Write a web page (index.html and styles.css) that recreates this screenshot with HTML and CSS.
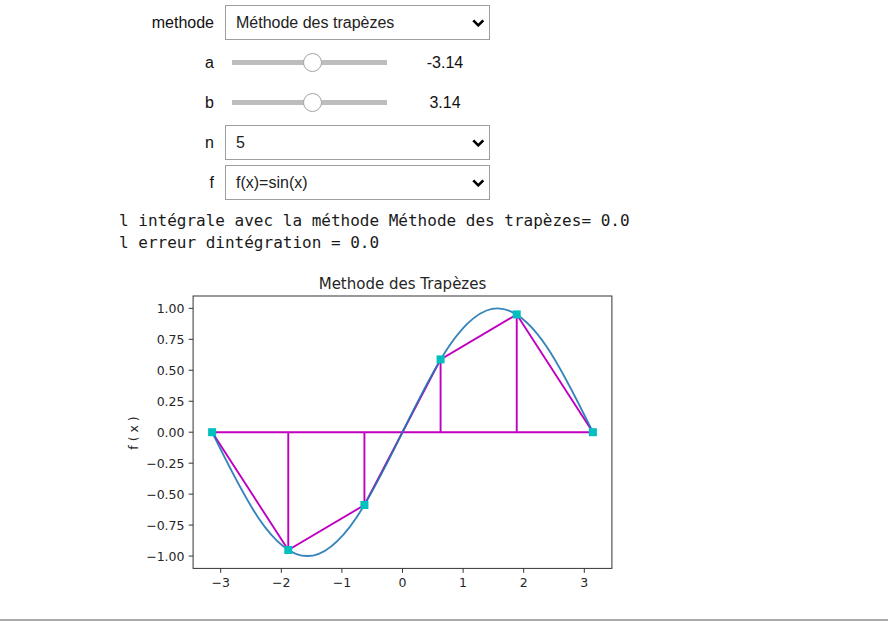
FILE: index.html
```html
<!DOCTYPE html>
<html lang="fr">
<head>
<meta charset="utf-8">
<title>Methode des Trapèzes</title>
<link rel="stylesheet" href="styles.css">
</head>
<body>
<div class="page">
  <div class="widgets">
    <div class="row">
      <label class="lbl">methode</label>
      <div class="dropdown"><span class="dd-text">Méthode des trapèzes</span><svg class="chev" viewBox="0 0 12 8"><path d="M1 1.3 L6 6.3 L11 1.3"/></svg></div>
    </div>
    <div class="row">
      <label class="lbl">a</label>
      <div class="slider"><div class="track"><span class="thumb"></span></div><span class="readout">-3.14</span></div>
    </div>
    <div class="row">
      <label class="lbl">b</label>
      <div class="slider"><div class="track"><span class="thumb"></span></div><span class="readout">3.14</span></div>
    </div>
    <div class="row">
      <label class="lbl">n</label>
      <div class="dropdown"><span class="dd-text">5</span><svg class="chev" viewBox="0 0 12 8"><path d="M1 1.3 L6 6.3 L11 1.3"/></svg></div>
    </div>
    <div class="row">
      <label class="lbl">f</label>
      <div class="dropdown"><span class="dd-text">f(x)=sin(x)</span><svg class="chev" viewBox="0 0 12 8"><path d="M1 1.3 L6 6.3 L11 1.3"/></svg></div>
    </div>
  </div>
  <pre class="out">l intégrale avec la méthode Méthode des trapèzes= 0.0
l erreur dintégration = 0.0</pre>
  <svg class="fig" viewBox="110 254 520 350" xmlns="http://www.w3.org/2000/svg">
    <text class="title" x="402.5" y="288.5" text-anchor="middle">Methode des Trapèzes</text>
    <g class="magenta">
      <line x1="212.12" y1="432.2" x2="592.88" y2="432.2"/>
      <line x1="288.27" y1="432.2" x2="288.27" y2="549.99"/>
      <line x1="364.42" y1="432.2" x2="364.42" y2="505.0"/>
      <line x1="440.58" y1="432.2" x2="440.58" y2="359.4"/>
      <line x1="516.73" y1="432.2" x2="516.73" y2="314.41"/>
      <polyline points="212.12,432.2 288.27,549.99 364.42,505.0 440.58,359.4 516.73,314.41 592.88,432.2"/>
    </g>
    <path class="sine" d="M212.12,432.2 C243.16,495.65 272.86,556.05 307.31,556.05 C341.76,556.05 371.45,495.65 402.5,432.2 C433.55,368.75 463.24,308.35 497.69,308.35 C532.14,308.35 561.84,368.75 592.88,432.2"/>
    <g class="markers">
      <rect x="208.12" y="428.2" width="8" height="8"/>
      <rect x="284.27" y="545.99" width="8" height="8"/>
      <rect x="360.42" y="501.0" width="8" height="8"/>
      <rect x="436.58" y="355.4" width="8" height="8"/>
      <rect x="512.73" y="310.41" width="8" height="8"/>
      <rect x="588.88" y="428.2" width="8" height="8"/>
    </g>
    <rect class="spine" x="193.1" y="296" width="418.8" height="272.4"/>
    <g class="ticks">
      <line x1="188.7" y1="308.35" x2="193.1" y2="308.35"/>
      <line x1="188.7" y1="339.31" x2="193.1" y2="339.31"/>
      <line x1="188.7" y1="370.28" x2="193.1" y2="370.28"/>
      <line x1="188.7" y1="401.24" x2="193.1" y2="401.24"/>
      <line x1="188.7" y1="432.2" x2="193.1" y2="432.2"/>
      <line x1="188.7" y1="463.16" x2="193.1" y2="463.16"/>
      <line x1="188.7" y1="494.13" x2="193.1" y2="494.13"/>
      <line x1="188.7" y1="525.09" x2="193.1" y2="525.09"/>
      <line x1="188.7" y1="556.05" x2="193.1" y2="556.05"/>
      <line x1="220.7" y1="568.4" x2="220.7" y2="572.8"/>
      <line x1="281.3" y1="568.4" x2="281.3" y2="572.8"/>
      <line x1="341.9" y1="568.4" x2="341.9" y2="572.8"/>
      <line x1="402.5" y1="568.4" x2="402.5" y2="572.8"/>
      <line x1="463.1" y1="568.4" x2="463.1" y2="572.8"/>
      <line x1="523.7" y1="568.4" x2="523.7" y2="572.8"/>
      <line x1="584.3" y1="568.4" x2="584.3" y2="572.8"/>
    </g>
    <g class="ylabels" text-anchor="end">
      <text x="184.5" y="312.85">1.00</text>
      <text x="184.5" y="343.81">0.75</text>
      <text x="184.5" y="374.78">0.50</text>
      <text x="184.5" y="405.74">0.25</text>
      <text x="184.5" y="436.7">0.00</text>
      <text x="184.5" y="467.66">−0.25</text>
      <text x="184.5" y="498.63">−0.50</text>
      <text x="184.5" y="529.59">−0.75</text>
      <text x="184.5" y="560.55">−1.00</text>
    </g>
    <g class="xlabels" text-anchor="middle">
      <text x="220.7" y="586.5">−3</text>
      <text x="281.3" y="586.5">−2</text>
      <text x="341.9" y="586.5">−1</text>
      <text x="402.5" y="586.5">0</text>
      <text x="463.1" y="586.5">1</text>
      <text x="523.7" y="586.5">2</text>
      <text x="584.3" y="586.5">3</text>
    </g>
    <text class="ylab" transform="translate(137.7,433) rotate(-90)" text-anchor="middle">f ( x )</text>
  </svg>
</div>
<div class="rule"></div>
</body>
</html>
```
FILE: styles.css
```css
html, body {
  margin: 0;
  padding: 0;
  background: #ffffff;
}

body {
  font-family: "Liberation Sans", Arial, sans-serif;
  color: #000;
}

.page {
  height: 619px;
  overflow: hidden;
}

.widgets {
  display: flex;
  flex-direction: column;
  gap: 5px;
  padding-top: 5px;
  padding-left: 114px;
}

.row {
  display: flex;
  align-items: center;
  height: 35px;
}

.lbl {
  width: 100px;
  margin-right: 11px;
  text-align: right;
  font-size: 16px;
  color: #111;
}

.dropdown {
  width: 265px;
  height: 35px;
  box-sizing: border-box;
  border: 1px solid #9e9e9e;
  display: flex;
  align-items: center;
  padding: 0 5px 0 10px;
  font-size: 16px;
  color: #222;
  background: #fff;
}

.dd-text {
  flex: 1;
  white-space: nowrap;
}

.chev {
  width: 12.5px;
  height: 8px;
  flex: none;
}

.chev path {
  fill: none;
  stroke: #000;
  stroke-width: 2.6;
  stroke-linecap: butt;
  stroke-linejoin: miter;
}

.slider {
  display: flex;
  align-items: center;
  width: 265px;
}

.track {
  position: relative;
  margin-left: 7px;
  width: 155px;
  height: 5px;
  background: #bdbdbd;
}

.thumb {
  position: absolute;
  left: 70.5px;
  top: -7px;
  width: 19px;
  height: 19px;
  box-sizing: border-box;
  border: 1px solid #a3a3a3;
  border-radius: 50%;
  background: #fff;
}

.readout {
  width: 80px;
  margin-left: 18px;
  text-align: center;
  font-size: 16px;
  color: #111;
}

.out {
  margin: 10px 0 0 0;
  padding-left: 119px;
  font-family: "DejaVu Sans Mono", "Liberation Mono", monospace;
  font-size: 16px;
  line-height: 22px;
  color: #1a1a1a;
}

.fig {
  display: block;
  margin-left: 110px;
  width: 520px;
  height: 350px;
  font-family: "DejaVu Sans", sans-serif;
}

.fig text {
  fill: #262626;
  font-size: 12.5px;
}

.fig .title {
  font-size: 15px;
}

.magenta line,
.magenta polyline {
  fill: none;
  stroke: #bf00bf;
  stroke-width: 1.9;
}

.sine {
  fill: none;
  stroke: #1f77b4;
  stroke-width: 1.9;
  opacity: 0.9;
}

.markers rect {
  fill: #00bfbf;
}

.spine {
  fill: none;
  stroke: #333;
  stroke-width: 1;
}

.ticks line {
  stroke: #333;
  stroke-width: 1;
}

.rule {
  height: 2px;
  background: #ababab;
}
```
